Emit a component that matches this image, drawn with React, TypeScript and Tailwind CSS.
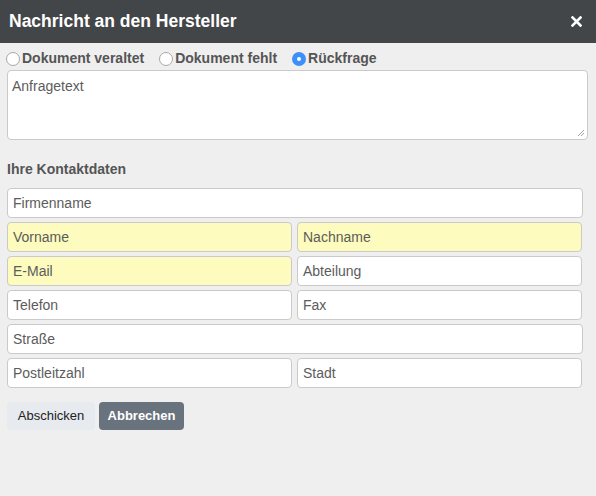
import React from "react";

const font = { fontFamily: '"Liberation Sans", Arial, sans-serif' };

function Field({ label, yellow, className = "" }: { label: string; yellow?: boolean; className?: string }) {
  return (
    <div
      className={`h-[30px] rounded-[4px] border border-[#cacaca] flex items-center pl-[5px] text-[14px] text-[#5c5c5c] ${
        yellow ? "bg-[#fdfbbd]" : "bg-white"
      } ${className}`}
    >
      {label}
    </div>
  );
}

function Radio({ label, checked }: { label: string; checked?: boolean }) {
  return (
    <div className="flex items-center gap-[2px]">
      {checked ? (
        <span className="w-[14px] h-[14px] rounded-full bg-[#3f8ffa] flex items-center justify-center">
          <span className="w-[4px] h-[4px] rounded-full bg-white" />
        </span>
      ) : (
        <span className="w-[14px] h-[14px] rounded-full bg-white border border-[#a8a8a8]" />
      )}
      <span className="text-[14px] font-bold text-[#555]">{label}</span>
    </div>
  );
}

export default function App() {
  return (
    <div style={font} className="w-[596px] h-[496px] bg-[#efefef] overflow-hidden">
      <div className="h-[43px] bg-[#434649] flex items-center justify-between pl-[9px] pr-[14px]">
        <span className="text-white font-bold text-[17.5px]">Nachricht an den Hersteller</span>
        <svg width="11" height="11" viewBox="0 0 11 11">
          <path d="M1.5 1.5 L9.5 9.5 M9.5 1.5 L1.5 9.5" stroke="white" strokeWidth="2.6" strokeLinecap="square" />
        </svg>
      </div>
      <div className="pl-[6px] pt-[8px]">
        <div className="flex items-center gap-[15px] h-[15px]">
          <Radio label="Dokument veraltet" />
          <Radio label="Dokument fehlt" />
          <Radio label="Rückfrage" checked />
        </div>
      </div>
      <div className="px-[7px] pr-[8px] mt-[4px]">
        <div className="relative h-[70px] bg-white border border-[#cacaca] rounded-[4px] pl-[4px] pt-[5px] text-[14px] text-[#5c5c5c]">
          Anfragetext
          <svg className="absolute right-[2px] bottom-[2px]" width="8" height="8" viewBox="0 0 8 8">
            <path d="M1 7 L7 1 M4 7 L7 4" stroke="#888" strokeWidth="0.8" />
          </svg>
        </div>
      </div>
      <div className="px-[7px] mt-[21px]">
        <div className="text-[14px] font-bold text-[#555] leading-[16px]">Ihre Kontaktdaten</div>
        <div className="w-[576px] mt-[11px] flex flex-col gap-[4px]">
          <Field label="Firmenname" />
          <div className="flex gap-[5px]">
            <Field label="Vorname" yellow className="w-[285px]" />
            <Field label="Nachname" yellow className="w-[285px]" />
          </div>
          <div className="flex gap-[5px]">
            <Field label="E-Mail" yellow className="w-[285px]" />
            <Field label="Abteilung" className="w-[285px]" />
          </div>
          <div className="flex gap-[5px]">
            <Field label="Telefon" className="w-[285px]" />
            <Field label="Fax" className="w-[285px]" />
          </div>
          <Field label="Straße" />
          <div className="flex gap-[5px]">
            <Field label="Postleitzahl" className="w-[285px]" />
            <Field label="Stadt" className="w-[285px]" />
          </div>
        </div>
        <div className="flex gap-[4px] mt-[14px]">
          <button className="w-[88px] h-[28px] rounded-[4px] bg-[#e7eaee] text-[13px] text-[#222]">Abschicken</button>
          <button className="w-[85px] h-[28px] rounded-[4px] bg-[#68737d] text-[13px] font-bold text-white">Abbrechen</button>
        </div>
      </div>
    </div>
  );
}
